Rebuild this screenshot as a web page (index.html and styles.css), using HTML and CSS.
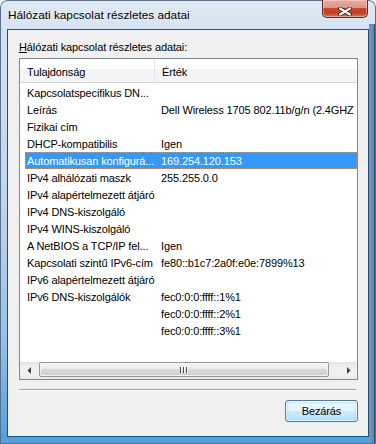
FILE: index.html
```html
<!DOCTYPE html>
<html lang="hu">
<head>
<meta charset="utf-8">
<title>Hálózati kapcsolat részletes adatai</title>
<link rel="stylesheet" href="styles.css">
</head>
<body>
<div class="window">
  <div class="titlebar">
    <span class="title">Hálózati kapcsolat részletes adatai</span>
    <button class="close" aria-label="Bezárás">
      <svg width="14" height="9" viewBox="0 0 14 9">
        <path d="M2 1.5 L12 7.5 M12 1.5 L2 7.5" stroke="#3a1d1a" stroke-width="3.8" stroke-linecap="round" fill="none"/>
        <path d="M2 1.5 L12 7.5 M12 1.5 L2 7.5" stroke="#ffffff" stroke-width="2.2" stroke-linecap="round" fill="none"/>
      </svg>
    </button>
  </div>
  <div class="client">
    <div class="label"><u>H</u>álózati kapcsolat részletes adatai:</div>
    <div class="listview">
      <div class="lv-header">
        <div class="hcol hcol1">Tulajdonság</div>
        <div class="hcol hcol2">Érték</div>
      </div>
      <div class="lv-body">
        <div class="row"><span class="c1">Kapcsolatspecifikus DN...</span><span class="c2"></span></div>
        <div class="row"><span class="c1">Leírás</span><span class="c2">Dell Wireless 1705 802.11b/g/n (2.4GHZ</span></div>
        <div class="row"><span class="c1">Fizikai cím</span><span class="c2"></span></div>
        <div class="row"><span class="c1">DHCP-kompatibilis</span><span class="c2">Igen</span></div>
        <div class="row selected"><span class="c1">Automatikusan konfigurá...</span><span class="c2">169.254.120.153</span></div>
        <div class="row"><span class="c1">IPv4 alhálózati maszk</span><span class="c2">255.255.0.0</span></div>
        <div class="row"><span class="c1">IPv4 alapértelmezett átjáró</span><span class="c2"></span></div>
        <div class="row"><span class="c1">IPv4 DNS-kiszolgáló</span><span class="c2"></span></div>
        <div class="row"><span class="c1">IPv4 WINS-kiszolgáló</span><span class="c2"></span></div>
        <div class="row"><span class="c1">A NetBIOS a TCP/IP fel...</span><span class="c2">Igen</span></div>
        <div class="row"><span class="c1">Kapcsolati szintű IPv6-cím</span><span class="c2">fe80::b1c7:2a0f:e0e:7899%13</span></div>
        <div class="row"><span class="c1">IPv6 alapértelmezett átjáró</span><span class="c2"></span></div>
        <div class="row"><span class="c1">IPv6 DNS-kiszolgálók</span><span class="c2">fec0:0:0:ffff::1%1</span></div>
        <div class="row"><span class="c1"></span><span class="c2">fec0:0:0:ffff::2%1</span></div>
        <div class="row"><span class="c1"></span><span class="c2">fec0:0:0:ffff::3%1</span></div>
      </div>
      <div class="hscroll">
        <div class="sb-arrow">
          <svg width="4" height="7" viewBox="0 0 4 7"><path d="M4 0 V7 L0.5 3.5 Z" fill="#404040"/></svg>
        </div>
        <div class="sb-track">
          <div class="sb-thumb"><span class="grip"></span><span class="grip"></span><span class="grip"></span></div>
        </div>
        <div class="sb-arrow">
          <svg width="4" height="7" viewBox="0 0 4 7"><path d="M0 0 V7 L3.5 3.5 Z" fill="#404040"/></svg>
        </div>
      </div>
    </div>
    <div class="sep"></div>
    <div class="actions">
      <button class="btn">Bezárás</button>
    </div>
  </div>
</div>
</body>
</html>
```

FILE: styles.css
```css
html, body {
  margin: 0;
  padding: 0;
}
body {
  font-family: "Liberation Sans", Arial, sans-serif;
  font-size: 11px;
  letter-spacing: -0.12px;
  color: #000;
  background: #fff;
}
.window {
  width: 376px;
  height: 444px;
  box-sizing: border-box;
  display: flex;
  flex-direction: column;
  border-radius: 7px 7px 0 0;
  background:
    linear-gradient(to right, transparent 369px, #6e97c1 369px, #5e89b6 374px, #2b4a6f 374px) 0 24px / 100% calc(100% - 24px) no-repeat,
    linear-gradient(180deg, #dfe9f5 0px, #d3e0f0 40px, #c3d5ea 200px, #97c0e6 340px, #4d9fe0 444px);
  box-shadow: inset 0 0 0 1px #56718f;
}
.titlebar {
  height: 29px;
  flex: none;
  display: flex;
  align-items: center;
  padding-left: 8px;
}
.title {
  flex: 1;
  font-size: 11.8px;
  letter-spacing: 0;
  color: #000;
  text-shadow: 0 0 6px rgba(255, 255, 255, 0.9);
  padding-top: 1px;
}
.close {
  align-self: flex-start;
  width: 46px;
  height: 18px;
  margin-right: 8px;
  padding: 7px 0 0 0;
  box-sizing: border-box;
  display: flex;
  justify-content: center;
  align-items: flex-start;
  border: 1px solid #5b2a24;
  border-top: none;
  border-radius: 0 0 5px 5px;
  background: linear-gradient(180deg, #e7b0a5 0%, #dc9485 45%, #c8462d 50%, #c53d22 75%, #d7735c 100%);
  box-shadow: inset 0 0 0 1px rgba(255, 220, 210, 0.45);
}
.close svg {
  display: block;
}
.client {
  flex: 1;
  margin: 0 7px 7px 7px;
  border: 1px solid #2f4c6d;
  background: #f0f0f0;
  display: flex;
  flex-direction: column;
  padding: 10px 10px 0 11px;
}
.label {
  line-height: 14px;
  height: 14px;
  margin-bottom: 4px;
}
.label u {
  text-decoration-thickness: 1px;
  text-underline-offset: 1px;
}
.listview {
  width: 339px;
  height: 322px;
  box-sizing: border-box;
  border: 1px solid #828790;
  background: #fff;
  display: flex;
  flex-direction: column;
}
.lv-header {
  height: 24px;
  flex: none;
  box-sizing: border-box;
  display: flex;
  border-bottom: 1px solid #d5d5d5;
  background: linear-gradient(180deg, #ffffff 0%, #ffffff 42%, #f3f4f6 42%, #f3f4f6 100%);
}
.hcol {
  display: flex;
  align-items: center;
  padding-top: 2px;
  box-sizing: border-box;
  color: #000;
}
.hcol1 {
  width: 135px;
  padding-left: 7px;
  border-right: 1px solid #e2e6ec;
}
.hcol2 {
  flex: 1;
  padding-left: 7px;
}
.lv-body {
  flex: 1;
  padding-top: 1px;
  overflow: hidden;
}
.row {
  height: 17px;
  margin-left: 5px;
  box-sizing: border-box;
  display: grid;
  grid-template-columns: 129px 1fr;
  align-items: center;
  white-space: nowrap;
  overflow: hidden;
  border: 1px solid transparent;
}
.row .c1 {
  padding-left: 1px;
  overflow: hidden;
}
.row .c2 {
  padding-left: 6px;
  overflow: hidden;
}
.row.selected {
  background: #3399ff;
  color: #fff;
  border: 1px dotted #e09040;
}
.hscroll {
  height: 17px;
  flex: none;
  display: flex;
  background: linear-gradient(180deg, #e3e3e3 0%, #efefef 25%, #f0f0f0 75%, #e9e9e9 100%);
}
.sb-arrow {
  width: 17px;
  display: flex;
  align-items: center;
  justify-content: center;
}
.sb-arrow svg {
  display: block;
}
.sb-track {
  flex: 1;
  display: flex;
  align-items: flex-start;
}
.sb-thumb {
  width: 290px;
  height: 15px;
  margin: 0 0 0 2px;
  box-sizing: border-box;
  border: 1px solid #979797;
  border-radius: 2px;
  background: linear-gradient(180deg, #f3f3f3 0%, #ebebeb 45%, #dbdbdb 50%, #cfcfcf 100%);
  box-shadow: inset 0 0 0 1px rgba(255, 255, 255, 0.7);
  display: flex;
  justify-content: center;
  align-items: center;
  gap: 1px;
}
.grip {
  width: 1px;
  height: 6px;
  background: #4f4f4f;
  box-shadow: 1px 0 0 #ffffff;
  margin-right: 1px;
}
.sep {
  width: 337px;
  height: 1px;
  margin-top: 9px;
  background: #a0a0a0;
  border-bottom: 1px solid #ffffff;
}
.actions {
  display: flex;
  justify-content: flex-end;
  margin-top: 9px;
}
.btn {
  width: 73px;
  height: 22px;
  font-family: "Liberation Sans", Arial, sans-serif;
  font-size: 11px;
  letter-spacing: -0.12px;
  color: #000;
  border: 1px solid #3c7fb1;
  border-radius: 3px;
  padding: 0;
  background: linear-gradient(180deg, #f0f8fd 0%, #e4f3fc 48%, #cdebfb 50%, #bfe3f6 100%);
  box-shadow: inset 0 0 0 1px rgba(255, 255, 255, 0.75), inset 0 0 3px 1px rgba(80, 200, 245, 0.55);
}
```
